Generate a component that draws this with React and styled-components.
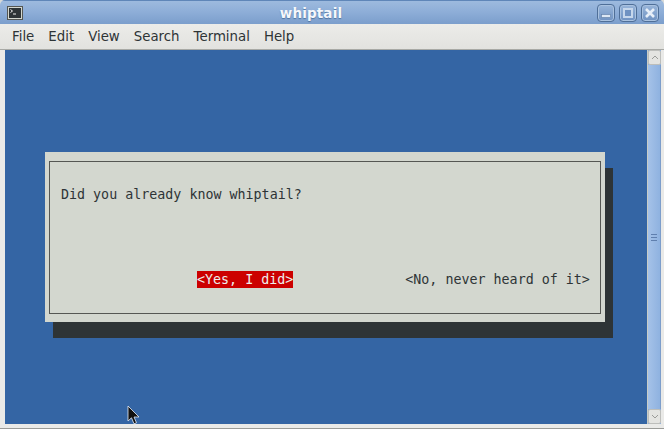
import React from "react";
import styled, { createGlobalStyle } from "styled-components";

const Global = createGlobalStyle`
  html, body { margin: 0; padding: 0; background: #d9dad6; overflow: hidden; }
  #root { width: 664px; height: 429px; }
`;

const Window = styled.div`
  position: relative;
  width: 664px;
  height: 429px;
  box-sizing: border-box;
  display: flex;
  flex-direction: column;
  overflow: hidden;
  background: #eaeae8;
  border-radius: 5px 5px 0 0;
  border-bottom: 1px solid #9a9b98;
`;

const TitleBar = styled.div`
  height: 24px;
  flex: none;
  display: grid;
  grid-template-columns: 1fr auto 1fr;
  align-items: center;
  padding: 0 5px 0 7px;
  box-sizing: border-box;
  background: linear-gradient(#9dbade 0%, #8dadd7 50%, #7b9ecc 100%);
  border-top: 1px solid #5f86b8;
`;

const AppIcon = styled.svg`
  width: 16px;
  height: 14px;
  display: block;
`;

const Title = styled.div`
  font: bold 13.5px "DejaVu Sans", sans-serif;
  letter-spacing: 0.15px;
  color: #f4f7fb;
  text-shadow: 0 1px 1px #4f739f;
  margin-right: 44px;
`;

const Controls = styled.div`
  display: flex;
  justify-content: flex-end;
  gap: 4px;
`;

const WinButton = styled.div`
  width: 18px;
  height: 18px;
  box-sizing: border-box;
  border: 1px solid #4f6f98;
  border-radius: 4px;
  display: flex;
  align-items: center;
  justify-content: center;
  background: linear-gradient(#98b5da, #6f92c2);
  box-shadow: inset 0 0 0 1px #a9c2e0;
  svg { display: block; }
`;

const MenuBar = styled.div`
  height: 26px;
  flex: none;
  box-sizing: border-box;
  display: flex;
  align-items: center;
  gap: 14px;
  padding: 0 0 0 12px;
  background: linear-gradient(#ecece9, #e2e2df);
  border-bottom: 1px solid #a8a9a5;
  font: 13.33px "DejaVu Sans", sans-serif;
  color: #2e3436;
`;

const Body = styled.div`
  flex: 1;
  display: flex;
  padding: 0 4px 4px 5px;
  min-height: 0;
`;

const Terminal = styled.div`
  flex: 1;
  background: #3465a4;
  padding: 102px 42px 0 40px;
  box-sizing: border-box;
`;

const Dialog = styled.div`
  width: 560px;
  height: 170px;
  box-sizing: border-box;
  padding: 9px 4px 8px 4px;
  background: #d3d7cf;
  box-shadow: 8px 16px 0 #2e3436;
`;

const Frame = styled.div`
  height: 100%;
  box-sizing: border-box;
  border: 1px solid #555753;
  padding: 24px 11px 25px 11px;
  display: flex;
  flex-direction: column;
  justify-content: space-between;
  font: 13.33px/17px "DejaVu Sans Mono", monospace;
  color: #2e3436;
`;

const Prompt = styled.div`
  white-space: pre;
`;

const Buttons = styled.div`
  display: flex;
  padding-left: 136px;
  gap: 112px;
`;

const Choice = styled.span`
  white-space: pre;
  height: 17px;
  background: ${(p) => (p.$active ? "#cc0000" : "transparent")};
  color: ${(p) => (p.$active ? "#eeeeec" : "#2e3436")};
`;

const Scrollbar = styled.div`
  width: 13px;
  flex: none;
  display: flex;
  flex-direction: column;
  border-left: 1px solid #c8ccc6;
  background: #8eb0dd;
`;

const Arrow = styled.div`
  height: 15px;
  flex: none;
  display: flex;
  align-items: center;
  justify-content: center;
  background: #e4e4e1;
  border: 1px solid #bdbebb;
  border-radius: 2px;
  box-sizing: border-box;
`;

const Thumb = styled.div`
  flex: 1;
  display: flex;
  flex-direction: column;
  align-items: center;
  justify-content: center;
  gap: 2px;
  background: linear-gradient(90deg, #a5c2e8, #8fb2e0);
  border-right: 1px solid #7d9ecb;
  i { display: block; width: 6px; height: 1px; background: #5f7fae; }
`;

const Pointer = styled.svg`
  position: absolute;
  left: 127px;
  top: 405px;
  width: 14px;
  height: 21px;
`;

export default function App() {
  return (
    <Window>
      <Global />
      <TitleBar>
        <AppIcon viewBox="0 0 16 14">
          <rect x="0.5" y="0.5" width="15" height="13" fill="#d3d7cf" stroke="#555753" />
          <rect x="2" y="2" width="12" height="10" fill="#2e3436" />
          <path d="M3.5 3.5l2 1.5-2 1.5M6 8h3" stroke="#eeeeec" fill="none" />
        </AppIcon>
        <Title>whiptail</Title>
        <Controls>
          <WinButton>
            <svg width="12" height="12" viewBox="0 0 12 12"><rect x="1.5" y="7.5" width="9" height="3" fill="#dce7f4" stroke="#5c7ca6" strokeWidth="0.6" /></svg>
          </WinButton>
          <WinButton>
            <svg width="12" height="12" viewBox="0 0 12 12"><rect x="2" y="2" width="8" height="8" fill="#6f92c2" stroke="#c6d7ec" strokeWidth="2" /></svg>
          </WinButton>
          <WinButton>
            <svg width="12" height="12" viewBox="0 0 12 12"><path d="M2 2l8 8M10 2l-8 8" stroke="#e6eef8" strokeWidth="2.6" /></svg>
          </WinButton>
        </Controls>
      </TitleBar>
      <MenuBar>
        <span>File</span>
        <span>Edit</span>
        <span>View</span>
        <span>Search</span>
        <span>Terminal</span>
        <span>Help</span>
      </MenuBar>
      <Body>
        <Terminal>
          <Dialog>
            <Frame>
              <Prompt>Did you already know whiptail?</Prompt>
              <Buttons>
                <Choice $active>{"<Yes, I did>"}</Choice>
                <Choice>{"<No, never heard of it>"}</Choice>
              </Buttons>
            </Frame>
          </Dialog>
        </Terminal>
        <Scrollbar>
          <Arrow>
            <svg width="8" height="5" viewBox="0 0 8 5"><path d="M1 4l3-3 3 3" fill="none" stroke="#9a9b98" /></svg>
          </Arrow>
          <Thumb><i /><i /><i /></Thumb>
          <Arrow>
            <svg width="8" height="5" viewBox="0 0 8 5"><path d="M1 1l3 3 3-3" fill="none" stroke="#9a9b98" /></svg>
          </Arrow>
        </Scrollbar>
      </Body>
      <Pointer viewBox="0 0 14 21">
        <path d="M1 1v15l3.5-3.2 2.5 6 2.5-1-2.5-5.8h5z" fill="#111" stroke="#e8eef5" strokeWidth="0.8" />
      </Pointer>
    </Window>
  );
}
